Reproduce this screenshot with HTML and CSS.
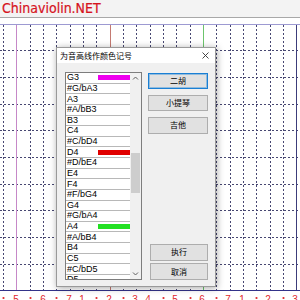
FILE: index.html
```html
<!DOCTYPE html>
<html lang="zh">
<head>
<meta charset="utf-8">
<title>Chinaviolin.NET</title>
<link rel="stylesheet" href="styles.css">
</head>
<body>
<header class="site"><span class="brand">Chinaviolin.NET</span></header>
<main class="stage">
  <svg class="grid" width="300" height="282" viewBox="0 18 300 282" xmlns="http://www.w3.org/2000/svg">
    <g class="hl">
      <line class="top" x1="0" y1="24.5" x2="300" y2="24.5"/>
      <line class="dash" x1="0" y1="50.5" x2="300" y2="50.5"/>
      <line class="dash" x1="0" y1="77.5" x2="300" y2="77.5"/>
      <line class="dash" x1="0" y1="104.5" x2="300" y2="104.5"/>
      <line class="dash" x1="0" y1="130.5" x2="300" y2="130.5"/>
      <line class="dash" x1="0" y1="157.5" x2="300" y2="157.5"/>
      <line class="dash" x1="0" y1="184.5" x2="300" y2="184.5"/>
      <line class="dash" x1="0" y1="210.5" x2="300" y2="210.5"/>
      <line class="dash" x1="0" y1="237.5" x2="300" y2="237.5"/>
      <line class="dash" x1="0" y1="264.5" x2="300" y2="264.5"/>
      <line class="bottom" x1="0" y1="290.5" x2="300" y2="290.5"/>
    </g>
    <g class="vl">
      <line class="dash" x1="3.5" y1="25" x2="3.5" y2="290"/>
      <line class="pink" x1="16.5" y1="25" x2="16.5" y2="290"/>
      <line class="dash" x1="30.5" y1="25" x2="30.5" y2="290"/>
      <line class="dash" x1="43.5" y1="25" x2="43.5" y2="290"/>
      <line class="dash" x1="56.5" y1="25" x2="56.5" y2="290"/>
      <line class="dash" x1="70.5" y1="25" x2="70.5" y2="290"/>
      <line class="dash" x1="83.5" y1="25" x2="83.5" y2="290"/>
      <line class="dash" x1="96.5" y1="25" x2="96.5" y2="290"/>
      <line class="rust" x1="110.5" y1="25" x2="110.5" y2="290"/>
      <line class="dash" x1="123.5" y1="25" x2="123.5" y2="290"/>
      <line class="dash" x1="136.5" y1="25" x2="136.5" y2="290"/>
      <line class="dash" x1="150.5" y1="25" x2="150.5" y2="290"/>
      <line class="dash" x1="163.5" y1="25" x2="163.5" y2="290"/>
      <line class="dash" x1="176.5" y1="25" x2="176.5" y2="290"/>
      <line class="dash" x1="190.5" y1="25" x2="190.5" y2="290"/>
      <line class="green" x1="203.5" y1="25" x2="203.5" y2="290"/>
      <line class="dash" x1="216.5" y1="25" x2="216.5" y2="290"/>
      <line class="dash" x1="230.5" y1="25" x2="230.5" y2="290"/>
      <line class="dash" x1="243.5" y1="25" x2="243.5" y2="290"/>
      <line class="dash" x1="256.5" y1="25" x2="256.5" y2="290"/>
      <line class="dash" x1="270.5" y1="25" x2="270.5" y2="290"/>
      <line class="dash" x1="283.5" y1="25" x2="283.5" y2="290"/>
      <line class="navy" x1="296.5" y1="25" x2="296.5" y2="290"/>
    </g>
    <g class="dots">
      <circle cx="3.5" cy="298" r="1.1"/>
      <circle cx="30.5" cy="298" r="1.1"/>
      <circle cx="56.5" cy="298" r="1.1"/>
      <circle cx="96.5" cy="298" r="1.1"/>
      <circle cx="123.5" cy="298" r="1.1"/>
      <circle cx="163.5" cy="298" r="1.1"/>
      <circle cx="190.5" cy="298" r="1.1"/>
      <circle cx="216.5" cy="298" r="1.1"/>
      <circle cx="256.5" cy="298" r="1.1"/>
      <circle cx="283.5" cy="298" r="1.1"/>
    </g>
    <g class="notes">
      <text x="16" y="303">5</text>
      <text x="43" y="303">6</text>
      <text x="69" y="303">7</text>
      <text x="82" y="303">1</text>
      <text x="109" y="303">2</text>
      <text x="135" y="303">3</text>
      <text x="148" y="303">4</text>
      <text x="175" y="303">5</text>
      <text x="202" y="303">6</text>
      <text x="228" y="303">7</text>
      <text x="242" y="303">1</text>
      <text x="268" y="303">2</text>
      <text x="295" y="303">3</text>
    </g>
  </svg>

  <section class="dialog">
    <div class="titlebar">
      <span class="title">为音高线作颜色记号</span>
      <svg class="close" width="7" height="7" viewBox="0 0 7 7" xmlns="http://www.w3.org/2000/svg"><path d="M0.5 0.5 L6.5 6.5 M6.5 0.5 L0.5 6.5"/></svg>
    </div>
    <div class="body">
      <div class="listbox">
        <ul class="items">
          <li class="item"><span>G3</span><i class="swatch magenta"></i></li>
          <li class="item"><span>#G/bA3</span></li>
          <li class="item"><span>A3</span></li>
          <li class="item"><span>#A/bB3</span></li>
          <li class="item"><span>B3</span></li>
          <li class="item"><span>C4</span></li>
          <li class="item"><span>#C/bD4</span></li>
          <li class="item"><span>D4</span><i class="swatch red"></i></li>
          <li class="item"><span>#D/bE4</span></li>
          <li class="item"><span>E4</span></li>
          <li class="item"><span>F4</span></li>
          <li class="item"><span>#F/bG4</span></li>
          <li class="item"><span>G4</span></li>
          <li class="item"><span>#G/bA4</span></li>
          <li class="item"><span>A4</span><i class="swatch green"></i></li>
          <li class="item"><span>#A/bB4</span></li>
          <li class="item"><span>B4</span></li>
          <li class="item"><span>C5</span></li>
          <li class="item"><span>#C/bD5</span></li>
          <li class="item"><span>D5</span></li>
        </ul>
        <div class="scrollbar">
          <span class="arrow">
            <svg width="7" height="5" viewBox="0 0 7 5" xmlns="http://www.w3.org/2000/svg"><path d="M1 3.5 L3.5 1 L6 3.5"/></svg>
          </span>
          <span class="track"><span class="thumb"></span></span>
          <span class="arrow">
            <svg width="7" height="5" viewBox="0 0 7 5" xmlns="http://www.w3.org/2000/svg"><path d="M1 1.5 L3.5 4 L6 1.5"/></svg>
          </span>
        </div>
      </div>
      <div class="buttons">
        <div class="group">
          <button class="btn default">二胡</button>
          <button class="btn">小提琴</button>
          <button class="btn">吉他</button>
        </div>
        <div class="group lower">
          <button class="btn narrow">执行</button>
          <button class="btn narrow">取消</button>
        </div>
      </div>
    </div>
  </section>
</main>
</body>
</html>
```

FILE: styles.css
```css
* {
  box-sizing: border-box;
  margin: 0;
  padding: 0;
}

html,
body {
  width: 300px;
  height: 300px;
  overflow: hidden;
  background: #ffffff;
}

body {
  font-family: "Liberation Sans", Arial, sans-serif;
  color: #000;
}

.site {
  height: 18px;
  background: #f3f3f3;
  border-bottom: 1px solid #a8a8a8;
  padding-left: 2px;
}

.brand {
  display: block;
  font-family: "DejaVu Sans Condensed", "DejaVu Sans", sans-serif;
  font-size: 14px;
  line-height: 17px;
  color: #d6141e;
  -webkit-text-stroke: 0.2px #d6141e;
}

.stage {
  position: relative;
  height: 282px;
}

.grid {
  position: absolute;
  left: 0;
  top: 0;
  display: block;
}

.grid line {
  stroke-width: 1;
  shape-rendering: crispEdges;
}

.grid .dash {
  stroke: #474772;
  stroke-dasharray: 2 2;
}

.grid .top {
  stroke: #9d9ad2;
}

.grid .bottom {
  stroke: #33338a;
}

.grid .pink {
  stroke: #c688c8;
}

.grid .rust {
  stroke: #c47a72;
}

.grid .green {
  stroke: #6cc46c;
}

.grid .navy {
  stroke: #3c3c7a;
}

.grid .dots circle {
  fill: #e0282c;
}

.grid .notes text {
  fill: #e0282c;
  font-family: "Liberation Sans", Arial, sans-serif;
  font-size: 10px;
  text-anchor: middle;
}

.dialog {
  position: absolute;
  left: 56px;
  top: 29px;
  width: 160px;
  height: 240px;
  background: #f0f0f0;
  border: 1px solid #9a9a9a;
  box-shadow: 1px 1px 7px rgba(0, 0, 0, 0.35);
  display: flex;
  flex-direction: column;
}

.titlebar {
  height: 15px;
  background: #ffffff;
  display: flex;
  align-items: center;
  justify-content: space-between;
  padding: 0 6px 0 3px;
}

.title {
  font-family: "Noto Sans CJK SC", sans-serif;
  font-size: 8px;
  line-height: 15px;
  color: #000;
}

.close path {
  stroke: #333;
  stroke-width: 0.9;
  fill: none;
}

.body {
  flex: 1;
  display: flex;
  gap: 6px;
  padding: 9px 7px 6px 8px;
}

.listbox {
  width: 77px;
  height: 208px;
  border: 1px solid #7d7d7d;
  background: #ffffff;
  display: flex;
}

.items {
  width: 64px;
  list-style: none;
  overflow: hidden;
}

.item {
  height: 10.64px;
  border-bottom: 1px solid #b8b8b8;
  display: flex;
  align-items: center;
  justify-content: space-between;
  padding-left: 1px;
  font-size: 9px;
  line-height: 9px;
  color: #000;
}

.swatch {
  display: block;
  width: 32px;
  height: 5px;
}

.swatch.magenta {
  background: #ee00ee;
}

.swatch.red {
  background: #e00000;
}

.swatch.green {
  background: #22e022;
}

.scrollbar {
  width: 11px;
  background: #f0f0f0;
  display: flex;
  flex-direction: column;
}

.arrow {
  height: 11px;
  display: flex;
  align-items: center;
  justify-content: center;
}

.arrow path {
  stroke: #606060;
  stroke-width: 1;
  fill: none;
}

.track {
  flex: 1;
  display: flex;
  flex-direction: column;
  padding: 0 1px;
}

.thumb {
  margin-top: 69px;
  height: 40px;
  background: #cdcdcd;
}

.buttons {
  width: 60px;
  display: flex;
  flex-direction: column;
  justify-content: space-between;
}

.group {
  display: flex;
  flex-direction: column;
  gap: 5.8px;
  padding-top: 0.5px;
}

.group.lower {
  gap: 2.7px;
  padding-top: 0;
  align-items: flex-end;
}

.btn {
  height: 16.5px;
  width: 60px;
  background: #e1e1e1;
  border: 1px solid #adadad;
  font-family: "Noto Sans CJK SC", sans-serif;
  font-size: 8px;
  line-height: 14px;
  color: #000;
}

.btn.default {
  border-color: #1a7fd4;
  box-shadow: inset 0 0 0 1px rgba(0, 120, 215, 0.35);
}

.btn.narrow {
  width: 58px;
  height: 16.7px;
}
```
